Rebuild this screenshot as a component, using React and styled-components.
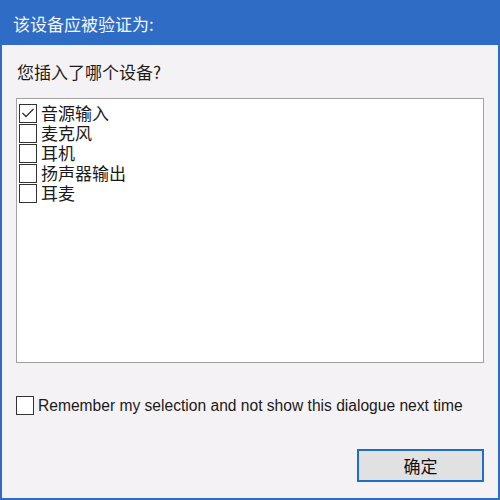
import React from "react";
import styled, { createGlobalStyle } from "styled-components";

const Global = createGlobalStyle`
  html, body {
    margin: 0;
    padding: 0;
    background: #f5f2f5;
  }
  * {
    box-sizing: border-box;
  }
`;

const Window = styled.div`
  width: 500px;
  height: 500px;
  display: flex;
  flex-direction: column;
  background: #f5f2f5;
  border: 2px solid #2e6cc6;
  border-top: none;
  font-family: "Noto Sans CJK SC", "Liberation Sans", sans-serif;
  color: #1a1a1a;
`;

const TitleBar = styled.div`
  height: 45px;
  flex-shrink: 0;
  display: flex;
  align-items: center;
  padding: 2px 0 0 11px;
  background: #2e6cc6;
  color: #f4f6fb;
  font-size: 17px;
`;

const Body = styled.div`
  flex: 1;
  display: flex;
  flex-direction: column;
  padding: 0 14px;
`;

const Prompt = styled.div`
  margin-top: 15px;
  height: 24px;
  line-height: 24px;
  font-size: 17px;
  padding-left: 1px;
`;

const ListBox = styled.div`
  margin-top: 14px;
  height: 265px;
  background: #ffffff;
  border: 1px solid #a2a2a2;
  padding: 4px 2px;
  display: flex;
  flex-direction: column;
`;

const Item = styled.label`
  display: flex;
  align-items: center;
  height: 20px;
  font-size: 17px;
  line-height: 20px;
  gap: 4px;
`;

const Box = styled.span`
  width: 18px;
  height: 19px;
  border: 1px solid #333;
  background: #fff;
  display: flex;
  align-items: center;
  justify-content: center;
  flex-shrink: 0;
`;

const RememberRow = styled.label`
  margin-top: 33px;
  display: flex;
  align-items: center;
  gap: 4px;
  font-family: "Liberation Sans", Arial, sans-serif;
  font-size: 15.6px;
  white-space: nowrap;
`;

const Footer = styled.div`
  margin-top: auto;
  margin-bottom: 16px;
  display: flex;
  justify-content: flex-end;
`;

const Button = styled.button`
  width: 127px;
  height: 33px;
  background: #e1e1e1;
  border: 2px solid #1f6fc4;
  font-family: "Noto Sans CJK SC", sans-serif;
  font-size: 17px;
  color: #111;
  padding: 0;
`;

const Check = ({ checked }) => (
  <Box>
    {checked && (
      <svg width="14" height="12" viewBox="0 0 14 12">
        <path d="M1.5 6 L5 9.5 L12.5 2" fill="none" stroke="#333" strokeWidth="1.3" />
      </svg>
    )}
  </Box>
);

const devices = [
  { name: "音源输入", checked: true },
  { name: "麦克风" },
  { name: "耳机" },
  { name: "扬声器输出" },
  { name: "耳麦" },
];

export default function App() {
  return (
    <>
      <Global />
      <Window>
        <TitleBar>该设备应被验证为:</TitleBar>
        <Body>
          <Prompt>您插入了哪个设备?</Prompt>
          <ListBox>
            {devices.map((d) => (
              <Item key={d.name}>
                <Check checked={d.checked} />
                {d.name}
              </Item>
            ))}
          </ListBox>
          <RememberRow>
            <Check />
            Remember my selection and not show this dialogue next time
          </RememberRow>
          <Footer>
            <Button>确定</Button>
          </Footer>
        </Body>
      </Window>
    </>
  );
}
